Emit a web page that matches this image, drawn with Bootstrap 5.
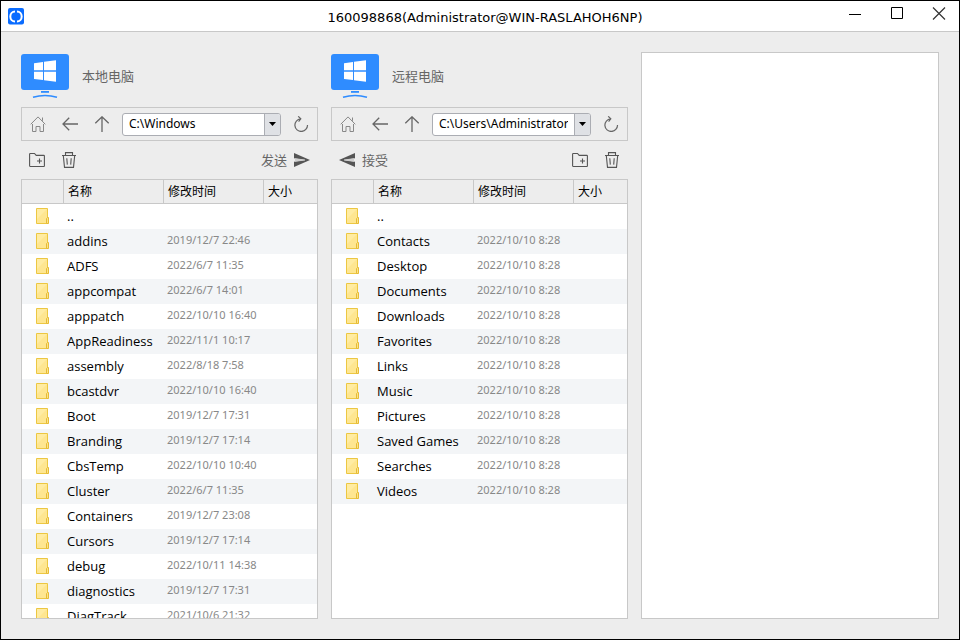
<!DOCTYPE html>
<html lang="zh-CN">
<head>
<meta charset="utf-8">
<meta name="viewport" content="width=device-width, initial-scale=1">
<title>160098868(Administrator@WIN-RASLAHOH6NP)</title>
<link href="https://cdn.jsdelivr.net/npm/bootstrap@5.3.0/dist/css/bootstrap.min.css" rel="stylesheet">
<style>
  body {
    font-family: "Noto Sans", "Noto Sans CJK SC", sans-serif;
    font-size: 13px;
    line-height: 20px;
    color: #000;
    background: #ededed;
  }
  svg { display: block; fill: none; }
  .app-window { border: 1px solid #000; }
  .titlebar { height: 31px; background: #fff; border-bottom: 1px solid #c8c8c8; }
  .title-logo { width: 134px; padding-left: 7px; }
  .title-text { font-family: "DejaVu Sans", sans-serif; font-size: 13px; }
  .win-controls { gap: 2px; }
  .win-btn { width: 40px; height: 26px; color: #000; }
  .workspace { padding: 20px; gap: 13px; }
  .pane { flex: 1 1 297px; min-width: 0; }
  .queue-pane { flex: 1 1 298px; min-width: 0; background: #fff; }
  .pane-head { height: 55px; padding: 2px 0 0; gap: 13px; color: #666; }
  .pane-head h2 { font-size: 13px; line-height: 20px; }
  .framed { border: 1px solid #c8c8c8; }
  .address-bar { height: 34px; }
  .tool-btn { width: 32px; height: 32px; color: #666; }
  .plain-btn { border: 0; padding: 0; background: transparent; display: flex; align-items: center; justify-content: center; }
  .plain-btn:hover { background: #e0e0e0; }
  .path-box { height: 23px; margin: 0 4px; border: 1px solid #abadb3; border-radius: 3px; background: #fff; overflow: hidden; }
  .path-box input { font-size: 12px; line-height: 20px; padding: 0; margin: 0 6px; border: 0; outline: 0; min-width: 0; width: 0; color: #000; background: transparent; }
  .path-box button { width: 16px; border: 0; border-left: 1px solid #abadb3; background: #dfe1e5; padding: 0; }
  .actions { height: 38px; }
  .transfer-btn { gap: 7px; height: 28px; padding: 0 8px; color: #666; }
  .file-list { min-height: 0; flex: 1 1 0; background: #fff; overflow-y: auto; scrollbar-width: none; }
  .file-list::-webkit-scrollbar { display: none; }
  .file-table { table-layout: fixed; width: 100%; border-collapse: separate; border-spacing: 0; }
  .file-table th, .file-table td { padding: 0 0 0 4px; white-space: nowrap; overflow: hidden; }
  .file-table th { height: 24px; font-size: 12px; line-height: 20px; font-weight: 400; background: #ededed; border-bottom: 1px solid #c8c8c8; position: sticky; top: 0; }
  .file-table th + th { border-left: 1px solid #c8c8c8; }
  .file-table td { height: 25px; line-height: 25px; vertical-align: top; }
  .file-table tbody tr:nth-child(even) { background: #f3f5f7; }
  .file-table td.icon-cell { padding: 4px 0 0 14px; }
  .file-table td.name-cell { font-family: "Open Sans", "Noto Sans CJK SC", sans-serif; }
  .file-table td.date-cell { font-size: 11px; line-height: 22px; color: #888; }
  .col-icon { width: 41px; }
  .col-wide { width: 100px; }
</style>
<script src="https://cdn.jsdelivr.net/npm/bootstrap@5.3.0/dist/js/bootstrap.bundle.min.js"></script>
</head>
<body>
<svg class="d-none" aria-hidden="true">
  <symbol id="i-computer" viewBox="0 0 48 44">
    <rect width="48" height="36" rx="3" fill="#2f8cff"/>
    <path d="M13 9.3 22 7.9V16.3H13ZM23 7.7 35 6.2V16.3H23ZM13 17.7H22V26.1L13 25ZM23 17.7H35V27.7L23 26.2Z" fill="#fff"/>
    <path d="M20 37H28V38.8H20Z" fill="#2f8cff"/>
    <path d="M12 43.3Q24 39.6 36 43.3" stroke="#2f8cff" stroke-width="1.5"/>
  </symbol>
  <symbol id="i-home" viewBox="0 0 16 16">
    <path d="M.7 8.3 8 .9 15.3 8.3M2.5 8V15.5H6V10.5H10V15.5H13.5V8M12.5 4.8V1.5" stroke="#888"/>
  </symbol>
  <symbol id="i-back" viewBox="0 0 16 16"><path d="M16 8H1M7.2 1.8 1 8 7.2 14.2" stroke="currentColor" stroke-width="1.3"/></symbol>
  <symbol id="i-up" viewBox="0 0 16 16"><path d="M8 16V1M1.3 7.3 8 .8 14.7 7.3" stroke="currentColor" stroke-width="1.3"/></symbol>
  <symbol id="i-refresh" viewBox="0 0 16 16"><path d="M7.6 2.9A6.3 6.3 0 1 0 14.5 9M5.2 .3 7.8 2.9 5.6 5.6" stroke="currentColor" stroke-width="1.2"/></symbol>
  <symbol id="i-newfolder" viewBox="0 0 16 16"><path d="M.6 13.6V2.2Q.6 1.5 1.2 1.5H5.5L7.2 3.4H14.8Q15.4 3.4 15.4 4V13.9Q15.4 14.5 14.8 14.5H1.2Q.6 14.5.6 13.6ZM10.5 6.5V11.5M8 9H13" stroke="#555" stroke-width="1.1"/></symbol>
  <symbol id="i-trash" viewBox="0 0 16 16"><path d="M1 3.5H15M4.5 3.5V.6H11.5V3.5M2.3 3.5 3.5 15.4H12.5L13.7 3.5M5.8 6.3 6.3 12.6M10.2 6.3 9.7 12.6" stroke="#555" stroke-width="1.1"/></symbol>
  <symbol id="i-send" viewBox="0 0 16 14"><path d="M0 0 16 7 0 14V8.8L11 7 0 5.2Z" fill="#555"/><path d="M1 5.2 11 6.5V7.5L1 8.8Z" fill="#d0d0d0"/></symbol>
  <symbol id="i-receive" viewBox="0 0 16 14"><path d="M16 0 0 7 16 14V8.8L5 7 16 5.2Z" fill="#555"/><path d="M15 5.2 5 6.5V7.5L15 8.8Z" fill="#d0d0d0"/></symbol>
  <symbol id="i-folder" viewBox="0 0 14 16">
    <path d="M.5.5H11.5V15.5H.5Z" fill="#fee691" stroke="#ecc742"/>
    <path d="M1 1H11L1 11Z" fill="#ffeca3"/>
    <path d="M10.5 15.5V10.5L11.5 9.5H12.5V15.5Z" fill="#fbe38b" stroke="#e6bb35"/>
  </symbol>
</svg>

<div class="app-window vh-100 d-flex flex-column overflow-hidden">
  <header class="titlebar d-flex flex-shrink-0">
    <div class="title-logo d-flex align-items-center">
      <svg width="16" height="17" viewBox="0 0 16 17"><rect width="16" height="16.5" rx="2" fill="#0a6cff"/><path d="M7 3.4A4.7 5.1 0 0 0 7 13.6M9 3.4A4.7 5.1 0 0 1 9 13.6" stroke="#fff" stroke-width="2"/></svg>
    </div>
    <h1 class="title-text flex-fill text-center align-self-center m-0 fw-normal pt-1">160098868(Administrator@WIN-RASLAHOH6NP)</h1>
    <div class="win-controls d-flex">
      <button type="button" class="plain-btn win-btn" aria-label="最小化"><svg width="14" height="14"><path d="M1 7.5H13" stroke="#000"/></svg></button>
      <button type="button" class="plain-btn win-btn" aria-label="最大化"><svg width="14" height="14"><path d="M1.5.5H12.5V11.5H1.5Z" stroke="#000"/></svg></button>
      <button type="button" class="plain-btn win-btn" aria-label="关闭"><svg width="14" height="14"><path d="M1 .5 13 12.5M13 .5 1 12.5" stroke="#333" stroke-width="1.2"/></svg></button>
    </div>
  </header>

  <main class="workspace d-flex flex-fill overflow-hidden">
    <section class="pane d-flex flex-column" aria-labelledby="localTitle">
      <div class="pane-head d-flex align-items-start flex-shrink-0">
        <svg width="48" height="44"><use href="#i-computer"/></svg>
        <h2 id="localTitle" class="m-0 fw-normal align-self-start pt-2 mt-1">本地电脑</h2>
      </div>
      <div class="address-bar framed d-flex align-items-center flex-shrink-0">
        <button type="button" class="plain-btn tool-btn" aria-label="主目录"><svg width="16" height="16"><use href="#i-home"/></svg></button>
        <button type="button" class="plain-btn tool-btn" aria-label="后退"><svg width="16" height="16"><use href="#i-back"/></svg></button>
        <button type="button" class="plain-btn tool-btn" aria-label="向上"><svg width="16" height="16"><use href="#i-up"/></svg></button>
        <div class="path-box d-flex flex-fill">
          <input type="text" class="flex-fill" aria-label="本地路径" value="C:\Windows">
          <button type="button" class="d-flex align-items-center justify-content-center" aria-label="展开本地路径"><svg width="7" height="4"><path d="M0 0H7L3.5 4Z" fill="#000"/></svg></button>
        </div>
        <button type="button" class="plain-btn tool-btn" aria-label="刷新"><svg width="16" height="16"><use href="#i-refresh"/></svg></button>
      </div>
      <div class="actions d-flex align-items-center flex-shrink-0">
        <button type="button" class="plain-btn tool-btn" aria-label="新建文件夹"><svg width="16" height="16"><use href="#i-newfolder"/></svg></button>
        <button type="button" class="plain-btn tool-btn" aria-label="删除"><svg width="16" height="16"><use href="#i-trash"/></svg></button>
        <button type="button" class="plain-btn transfer-btn ms-auto">发送<svg width="16" height="14"><use href="#i-send"/></svg></button>
      </div>
      <div class="file-list framed">
        <table class="file-table" aria-labelledby="localTitle">
          <colgroup><col class="col-icon"><col class="col-wide"><col class="col-wide"><col></colgroup>
          <thead><tr><th></th><th scope="col">名称</th><th scope="col">修改时间</th><th scope="col">大小</th></tr></thead>
          <tbody id="localFiles"></tbody>
        </table>
      </div>
    </section>

    <section class="pane d-flex flex-column" aria-labelledby="remoteTitle">
      <div class="pane-head d-flex align-items-start flex-shrink-0">
        <svg width="48" height="44"><use href="#i-computer"/></svg>
        <h2 id="remoteTitle" class="m-0 fw-normal align-self-start pt-2 mt-1">远程电脑</h2>
      </div>
      <div class="address-bar framed d-flex align-items-center flex-shrink-0">
        <button type="button" class="plain-btn tool-btn" aria-label="主目录"><svg width="16" height="16"><use href="#i-home"/></svg></button>
        <button type="button" class="plain-btn tool-btn" aria-label="后退"><svg width="16" height="16"><use href="#i-back"/></svg></button>
        <button type="button" class="plain-btn tool-btn" aria-label="向上"><svg width="16" height="16"><use href="#i-up"/></svg></button>
        <div class="path-box d-flex flex-fill">
          <input type="text" class="flex-fill" aria-label="远程路径" value="C:\Users\Administrator">
          <button type="button" class="d-flex align-items-center justify-content-center" aria-label="展开远程路径"><svg width="7" height="4"><path d="M0 0H7L3.5 4Z" fill="#000"/></svg></button>
        </div>
        <button type="button" class="plain-btn tool-btn" aria-label="刷新"><svg width="16" height="16"><use href="#i-refresh"/></svg></button>
      </div>
      <div class="actions d-flex align-items-center flex-shrink-0">
        <button type="button" class="plain-btn transfer-btn me-auto"><svg width="16" height="14"><use href="#i-receive"/></svg>接受</button>
        <button type="button" class="plain-btn tool-btn" aria-label="新建文件夹"><svg width="16" height="16"><use href="#i-newfolder"/></svg></button>
        <button type="button" class="plain-btn tool-btn" aria-label="删除"><svg width="16" height="16"><use href="#i-trash"/></svg></button>
      </div>
      <div class="file-list framed">
        <table class="file-table" aria-labelledby="remoteTitle">
          <colgroup><col class="col-icon"><col class="col-wide"><col class="col-wide"><col></colgroup>
          <thead><tr><th></th><th scope="col">名称</th><th scope="col">修改时间</th><th scope="col">大小</th></tr></thead>
          <tbody id="remoteFiles"></tbody>
        </table>
      </div>
    </section>

    <section class="queue-pane framed" aria-label="传输列表"></section>
  </main>
</div>

<script>
  const localFiles = [
    ["..", ""], ["addins", "2019/12/7 22:46"], ["ADFS", "2022/6/7 11:35"],
    ["appcompat", "2022/6/7 14:01"], ["apppatch", "2022/10/10 16:40"],
    ["AppReadiness", "2022/11/1 10:17"], ["assembly", "2022/8/18 7:58"],
    ["bcastdvr", "2022/10/10 16:40"], ["Boot", "2019/12/7 17:31"],
    ["Branding", "2019/12/7 17:14"], ["CbsTemp", "2022/10/10 10:40"],
    ["Cluster", "2022/6/7 11:35"], ["Containers", "2019/12/7 23:08"],
    ["Cursors", "2019/12/7 17:14"], ["debug", "2022/10/11 14:38"],
    ["diagnostics", "2019/12/7 17:31"], ["DiagTrack", "2021/10/6 21:32"]
  ];
  const remoteFiles = [["..", ""]].concat(
    ["Contacts", "Desktop", "Documents", "Downloads", "Favorites", "Links",
     "Music", "Pictures", "Saved Games", "Searches", "Videos"].map(n => [n, "2022/10/10 8:28"]));
  function fill(id, files) {
    document.getElementById(id).innerHTML = files.map(([name, date]) =>
      `<tr><td class="icon-cell"><svg width="14" height="16"><use href="#i-folder"/></svg></td><td class="name-cell">${name}</td><td class="date-cell">${date}</td><td></td></tr>`).join("");
  }
  fill("localFiles", localFiles);
  fill("remoteFiles", remoteFiles);
</script>
</body>
</html>
